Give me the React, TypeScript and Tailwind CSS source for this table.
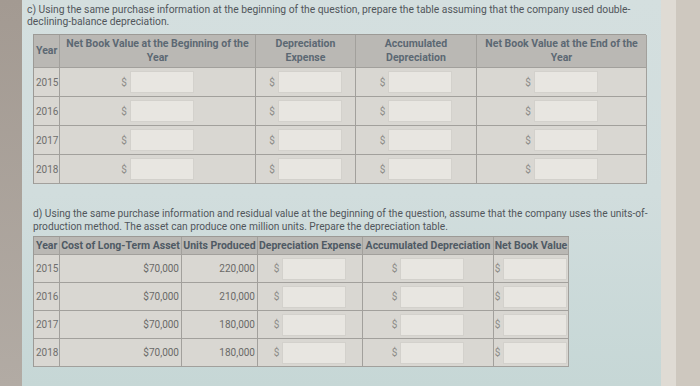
const rows1 = ['2015', '2016', '2017', '2018']

const rows2 = [
  { year: '2015', cost: '$70,000', units: '220,000' },
  { year: '2016', cost: '$70,000', units: '210,000' },
  { year: '2017', cost: '$70,000', units: '180,000' },
  { year: '2018', cost: '$70,000', units: '180,000' },
]

// dollar sign + empty answer box
function MoneyInput() {
  return (
    <div className="flex items-center gap-[3px]">
      <span className="text-[10px] text-[#8c8b88] font-normal">$</span>
      <div className="w-[64px] h-[22px] bg-[#e8e6e1] border border-[#d3d1cc]" />
    </div>
  )
}

function DecliningTable() {
  const cell = 'border-r border-b border-[#a2a09c] h-[29px] flex items-center'
  const head = 'border-r border-b border-[#a2a09c] h-[33px] flex items-center justify-center text-center leading-[14px] bg-[#bab8b4]'
  return (
    <div className="ml-[11px] mt-[6px] w-[613px] border border-[#9c9a96] border-r-0 border-b-0 grid grid-cols-[26px_196px_100px_121px_170px] bg-[#d9d7d2]">
      <div className={`${head} !justify-start pl-[2px]`}>Year</div>
      <div className={head}>Net Book Value at the Beginning of the<br />Year</div>
      <div className={head}>Depreciation<br />Expense</div>
      <div className={head}>Accumulated<br />Depreciation</div>
      <div className={head}>Net Book Value at the End of the<br />Year</div>
      {rows1.map((y) => (
        <div key={y} className="contents">
          <div className={`${cell} pl-[2px] text-[10px] text-[#6f6f6d] font-normal`}>{y}</div>
          <div className={`${cell} justify-center`}><MoneyInput /></div>
          <div className={`${cell} justify-center`}><MoneyInput /></div>
          <div className={`${cell} justify-center`}><MoneyInput /></div>
          <div className={`${cell} justify-center`}><MoneyInput /></div>
        </div>
      ))}
    </div>
  )
}

function UnitsTable() {
  const cell = 'border-r border-b border-[#a2a09c] h-[28px] flex items-center'
  const head = 'border-r border-b border-[#a2a09c] h-[18px] flex items-center justify-center whitespace-nowrap bg-[#bab8b4]'
  return (
    <div className="ml-[11px] mt-[3px] w-[536px] border border-[#9c9a96] border-r-0 border-b-0 grid grid-cols-[26px_122px_76px_105px_131px_75px] bg-[#d9d7d2]">
      <div className={`${head} !justify-start pl-[2px]`}>Year</div>
      <div className={head}>Cost of Long-Term Asset</div>
      <div className={head}>Units Produced</div>
      <div className={head}>Depreciation Expense</div>
      <div className={head}>Accumulated Depreciation</div>
      <div className={head}>Net Book Value</div>
      {rows2.map((r) => (
        <div key={r.year} className="contents">
          <div className={`${cell} pl-[2px] text-[10px] text-[#6f6f6d] font-normal`}>{r.year}</div>
          <div className={`${cell} justify-end pr-[2px] text-[10px] text-[#6a6a68] font-normal`}>{r.cost}</div>
          <div className={`${cell} justify-end pr-[2px] text-[10px] text-[#6a6a68] font-normal`}>{r.units}</div>
          <div className={`${cell} justify-center`}><MoneyInput /></div>
          <div className={`${cell} justify-center`}><MoneyInput /></div>
          <div className={`${cell} justify-center`}><MoneyInput /></div>
        </div>
      ))}
    </div>
  )
}

export default function App() {
  return (
    <div className="w-[700px] h-[386px] flex overflow-hidden font-[Roboto,sans-serif]">
      <div className="w-[22px] h-full bg-gradient-to-b from-[#a39a92] to-[#b2aba4]" />
      <div className="w-[639px] h-full bg-gradient-to-b from-[#d4dfdf] via-[#d1dddd] to-[#c6d7d6]">
        <div className="ml-[5px] mt-[4px] text-[10.3px] leading-[12px] text-[#51565b] whitespace-nowrap">
          c) Using the same purchase information at the beginning of the question, prepare the table assuming that the company used double-
          <br />
          declining-balance depreciation.
        </div>
        <div className="text-[10.5px] font-bold text-[#5c6873]">
          <DecliningTable />
        </div>
        <div className="ml-[11px] mt-[23px] text-[10.2px] leading-[13px] text-[#51565b] whitespace-nowrap">
          d) Using the same purchase information and residual value at the beginning of the question, assume that the company uses the units-of-
          <br />
          production method. The asset can produce one million units. Prepare the depreciation table.
        </div>
        <div className="text-[10.5px] font-bold text-[#4f5a64]">
          <UnitsTable />
        </div>
      </div>
      <div className="w-[15px] h-full bg-[#dfdbd4]" />
      <div className="flex-1 h-full bg-[#cec8bf]" />
    </div>
  )
}
